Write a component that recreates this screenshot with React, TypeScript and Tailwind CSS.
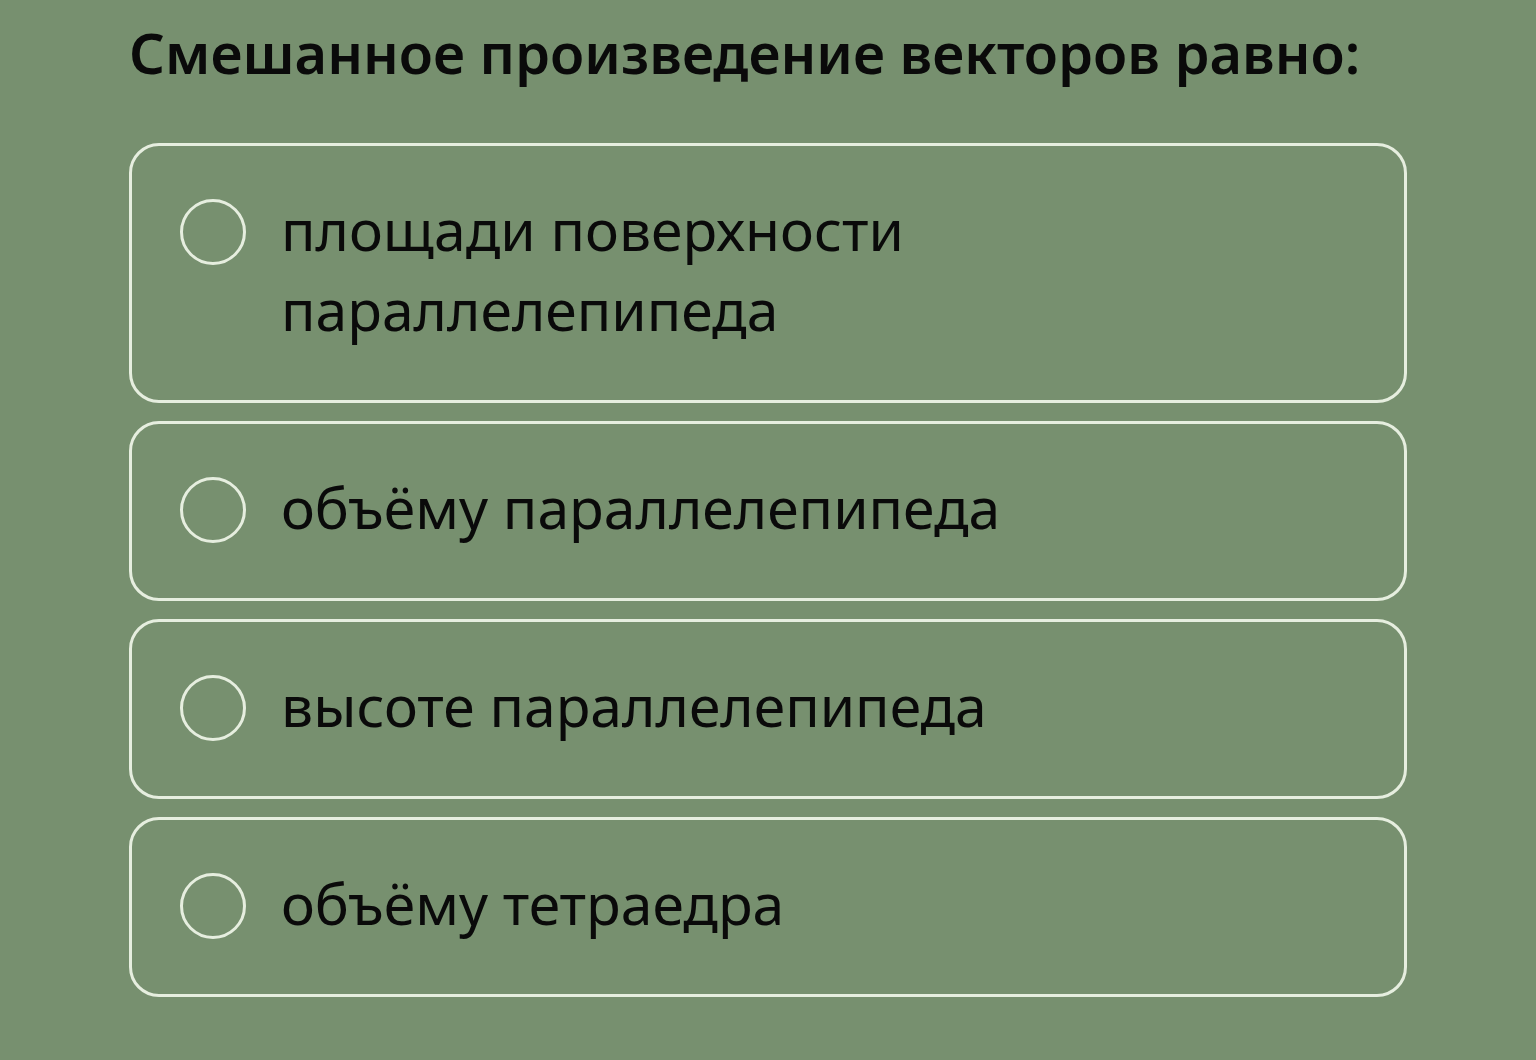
const OPTIONS = [
  "площади поверхности параллелепипеда",
  "объёму параллелепипеда",
  "высоте параллелепипеда",
  "объёму тетраедра",
];

export default function App() {
  return (
    <div className="min-h-[1060px] w-full bg-[#77906f] pl-[129px] pr-[129px] pt-[18px] font-['Noto_Sans',sans-serif] text-[#0a0a0a]">
      <h1 className="text-[56px] font-semibold leading-[68px]">Смешанное произведение векторов равно:</h1>
      <div className="mt-[57px] flex flex-col gap-[18px]">
        {OPTIONS.map((o) => (
          <div key={o} className="flex items-start rounded-[30px] border-[3px] border-[#e6eedf] pt-[43px] pb-[51px] pl-[48px] pr-[120px]">
            <div className="mt-[10px] h-[66px] w-[66px] shrink-0 rounded-full border-[3px] border-[#e6eedf]" />
            <p className="ml-[35px] max-w-[720px] text-[57px] leading-[80px]">{o}</p>
          </div>
        ))}
      </div>
    </div>
  );
}
